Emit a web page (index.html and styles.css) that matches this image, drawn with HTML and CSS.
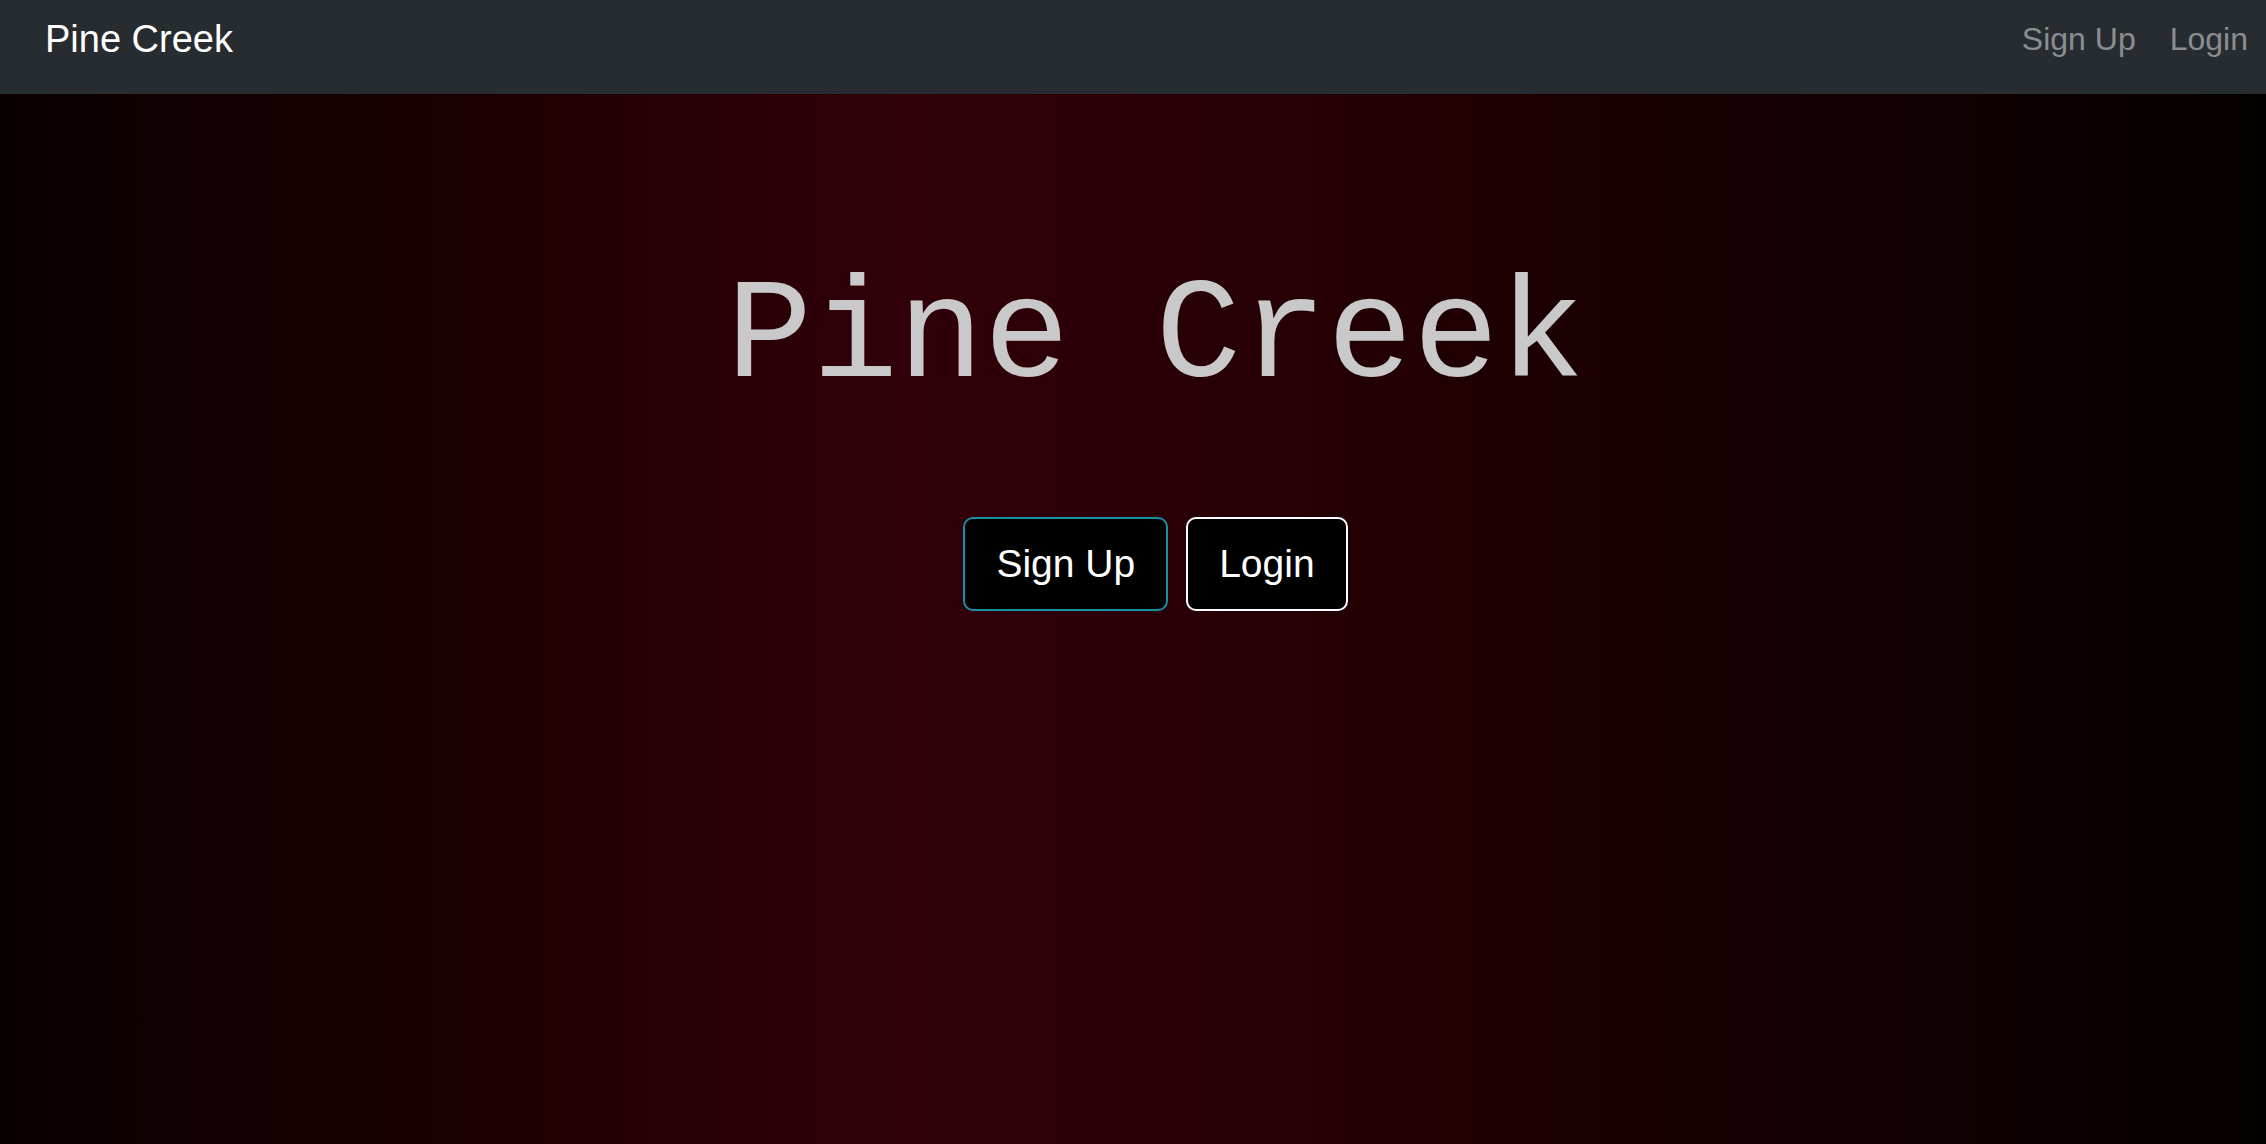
FILE: index.html
```html
<!DOCTYPE html>
<html lang="en">
<head>
<meta charset="utf-8">
<title>Pine Creek</title>
<link rel="stylesheet" href="styles.css">
</head>
<body>
<nav class="navbar">
  <a class="brand" href="#">Pine Creek</a>
  <div class="nav-links">
    <a class="nav-link" href="#">Sign Up</a>
    <a class="nav-link" href="#">Login</a>
  </div>
</nav>
<main class="hero">
  <h1 class="title">Pine Creek</h1>
  <div class="actions">
    <a class="btn btn-signup" href="#">Sign Up</a>
    <a class="btn btn-login" href="#">Login</a>
  </div>
</main>
</body>
</html>
```
FILE: styles.css
```css
html, body {
  margin: 0;
  padding: 0;
  height: 100%;
}
body {
  font-family: "Liberation Sans", Arial, sans-serif;
  background: linear-gradient(to right, #090000 0%, #1e0003 22%, #31000a 40%, #220004 62%, #050000 100%);
  min-height: 1144px;
}
a { text-decoration: none; }
.navbar {
  height: 94px;
  box-sizing: border-box;
  background: #272c30;
  display: flex;
  align-items: center;
  justify-content: space-between;
  padding: 0 18px 16px 45px;
}
.brand {
  color: #ffffff;
  font-size: 38px;
  line-height: 1;
}
.nav-links {
  display: flex;
  gap: 34px;
}
.nav-link {
  color: #8b8e91;
  font-size: 32px;
  line-height: 1;
}
.hero {
  display: flex;
  flex-direction: column;
  align-items: center;
  padding-left: 45px;
}
.title {
  margin: 169px 0 0 0;
  font-family: "Liberation Mono", "Courier New", monospace;
  font-weight: normal;
  font-size: 143px;
  line-height: 150px;
  color: #c9c9c9;
}
.actions {
  margin-top: 104px;
  display: flex;
  gap: 18px;
}
.btn {
  height: 94px;
  box-sizing: border-box;
  display: flex;
  align-items: center;
  padding: 0 31px;
  background: #000;
  color: #fff;
  font-size: 39px;
  border: 2px solid #fff;
  border-radius: 10px;
}
.btn-signup {
  border-color: #1a8fa6;
}
```
